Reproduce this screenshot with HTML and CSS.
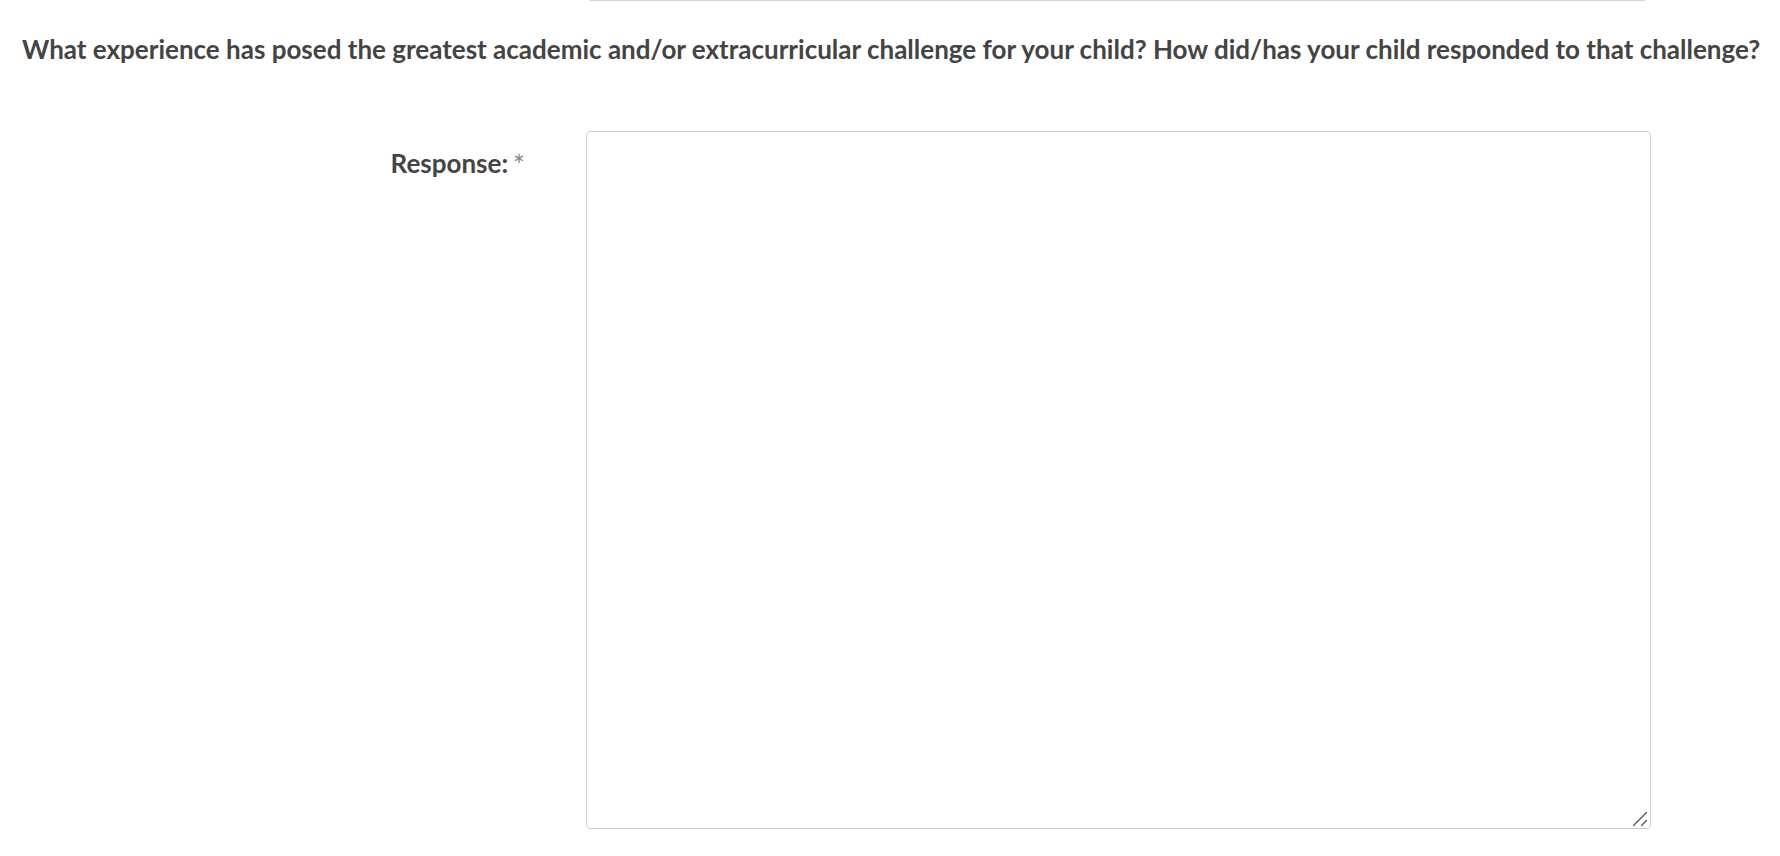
FILE: index.html
```html
<!DOCTYPE html>
<html lang="en">
<head>
<meta charset="utf-8">
<title>Response</title>
<link rel="stylesheet" href="styles.css">
</head>
<body>
<div class="prev-row">
  <div class="prev-spacer"></div>
  <div class="prev-box"></div>
</div>
<h2 class="question">What experience has posed the greatest academic and/or extracurricular challenge for your child? How did/has your child responded to that challenge?</h2>
<div class="form-row">
  <label class="label" for="resp">Response:<span class="req">*</span></label>
  <div class="field">
    <textarea id="resp" class="response"></textarea>
    <svg class="grip" width="16" height="16" viewBox="0 0 16 16" aria-hidden="true">
      <path d="M1.5 14.5 L14.5 1.5 M9.5 14.5 L14.5 9.5" stroke="#555" stroke-width="1.4" stroke-linecap="round" fill="none"/>
    </svg>
  </div>
</div>
</body>
</html>
```
FILE: styles.css
```css
html, body {
  margin: 0;
  padding: 0;
  background: #ffffff;
}
body {
  font-family: Lato, "Open Sans", sans-serif;
  color: #444444;
  overflow: hidden;
}
.prev-row {
  display: grid;
  grid-template-columns: 587px 1061px;
  height: 1px;
}
.prev-box {
  height: 12px;
  margin-top: -11px;
  border: 1px solid #d1d5da;
  border-radius: 4px;
  box-sizing: border-box;
}
.question {
  margin: 0;
  padding: 32px 0 0 22px;
  font-size: 26px;
  font-weight: 700;
  line-height: 32px;
  white-space: nowrap;
}
.form-row {
  display: grid;
  grid-template-columns: 586px 1065px;
  margin-top: 66px;
}
.label {
  justify-self: end;
  padding-right: 61px;
  padding-top: 16px;
  font-size: 26px;
  font-weight: 700;
  line-height: 32px;
}
.req {
  font-size: 28px;
  font-weight: 400;
  line-height: 0;
  vertical-align: -3px;
  color: #888888;
  margin-left: 5px;
}
.field {
  position: relative;
  width: 1065px;
  height: 698px;
}
.response {
  display: block;
  width: 100%;
  height: 100%;
  box-sizing: border-box;
  border: 1px solid #cbcfd3;
  border-radius: 4px;
  background: #fff;
  resize: none;
  margin: 0;
}
.grip {
  position: absolute;
  right: 3px;
  bottom: 2px;
  pointer-events: none;
}
```
